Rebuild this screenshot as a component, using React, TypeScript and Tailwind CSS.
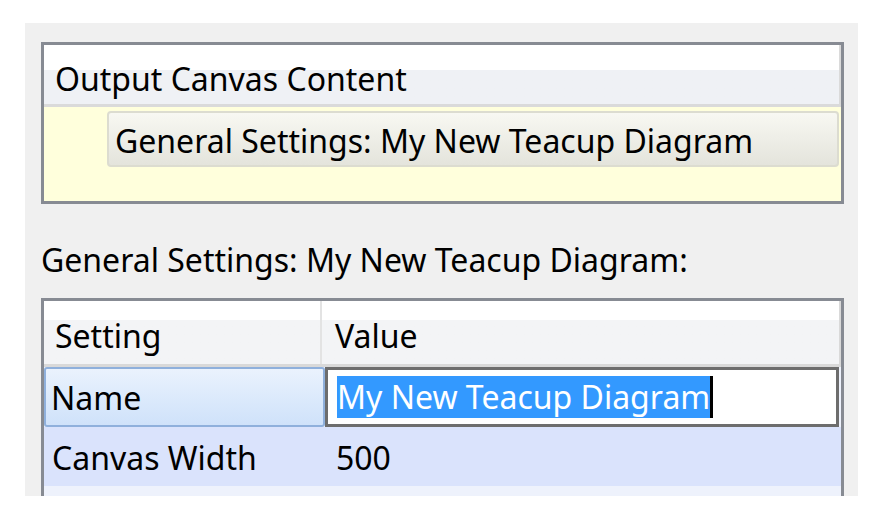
const App = () => {
  return (
    <div className="w-[880px] h-[520px] bg-white pt-[23px] pl-[25px] font-['Noto_Sans',sans-serif] text-[32px] text-black leading-none">
      <div className="w-[833px] h-[473px] bg-[#f0f0f0] pt-[19px] pl-[16px] overflow-hidden">
        {/* output canvas content */}
        <div className="w-[803px] h-[162px] border-[3px] border-[#878b93] flex flex-col">
          <div className="h-[62px] flex items-center pl-[11px] pt-[8px] bg-gradient-to-b from-white from-[42%] to-[#eff1f5] to-[42%] border-b-[3px] border-r-[2px] border-[#dadada]">
            Output Canvas Content
          </div>
          <div className="flex-1 bg-[#ffffdc] pl-[63px] pt-[4px] pr-[2px]">
            <div className="h-[56px] flex items-center pl-[6px] pt-[3px] rounded-[4px] border-2 border-[#dcdcd0] bg-gradient-to-b from-[#f8f8f2] to-[#e4e4dc]">
              General Settings: My New Teacup Diagram
            </div>
          </div>
        </div>

        <div className="h-[94px] flex items-center pt-[18px]">General Settings: My New Teacup Diagram:</div>

        {/* settings grid */}
        <div className="w-[803px] border-[3px] border-b-0 border-[#878b93] bg-[#eef2fc]">
          <div className="h-[66px] flex bg-gradient-to-b from-white from-[30%] to-[#f3f4f6] to-[30%] border-b-[3px] border-r-[2px] border-[#d9d9d9]">
            <div className="w-[278px] flex items-center pl-[11px] pt-[6px] border-r-[2px] border-[#e3e3e3]">Setting</div>
            <div className="flex-1 flex items-center pl-[13px] pt-[6px]">Value</div>
          </div>
          <div className="h-[60px] flex">
            <div className="w-[281px] flex items-center pl-[5px] pt-[2px] border-2 border-[#8fb0dc] rounded-[3px] bg-gradient-to-b from-[#eaf2fd] to-[#cfe2fa]">
              Name
            </div>
            <div className="w-[514px] flex items-center pl-[9px] border-[3px] border-[#6d6d6d] bg-white">
              <span className="bg-[#3399ff] text-white py-[5px]">My New Teacup Diagram</span>
              <span className="w-[3px] h-[42px] bg-black"></span>
            </div>
          </div>
          <div className="h-[59px] flex items-center bg-[#dae3fc]">
            <div className="w-[283px] pl-[8px] pt-[2px]">Canvas Width</div>
            <div className="pl-[9px] pt-[2px]">500</div>
          </div>
          <div className="h-[20px]"></div>
        </div>
      </div>
    </div>
  );
};

export default App;
